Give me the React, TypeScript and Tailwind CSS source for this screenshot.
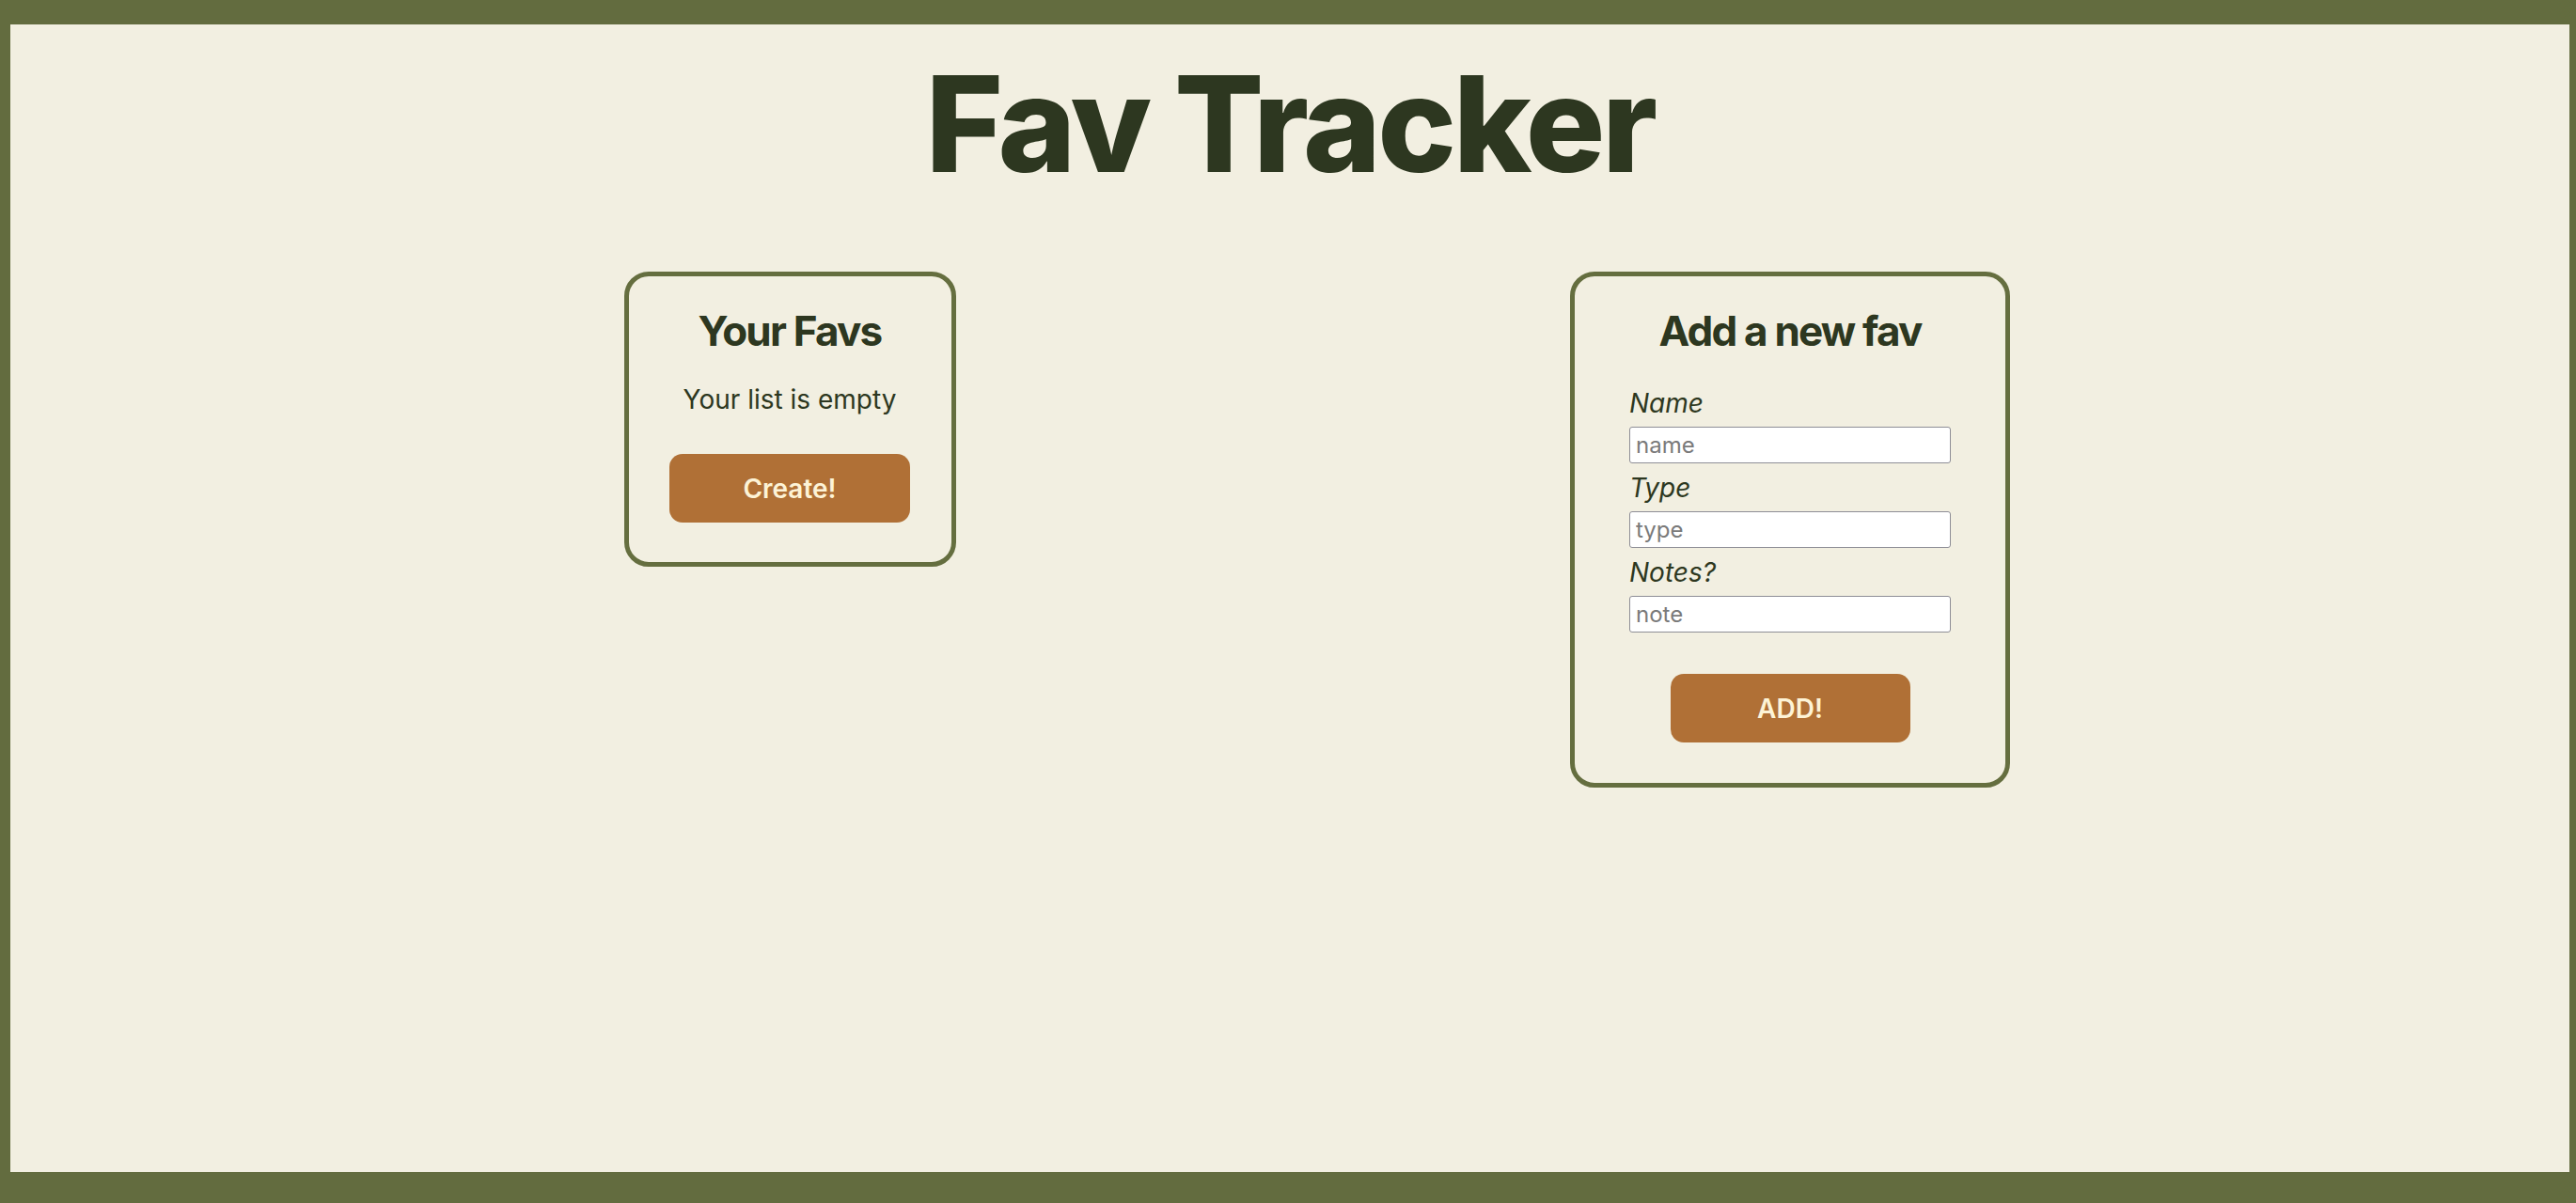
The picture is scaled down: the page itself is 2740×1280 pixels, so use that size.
import React from "react";

const font = { fontFamily: "Inter, 'Noto Sans', sans-serif" };

function Field({ label, placeholder }: { label: string; placeholder: string }) {
  return (
    <div className="flex flex-col">
      <label className="text-[28px] leading-none italic text-[#2d3720]">{label}</label>
      <input
        placeholder={placeholder}
        className="mt-[11px] h-[39px] w-[342px] rounded-[3px] border border-[#8e8e96] bg-white pl-[6px] text-[24px] text-[#2d3720] placeholder:text-[#7a7a7a] outline-none"
        style={font}
      />
    </div>
  );
}

export default function App() {
  return (
    <div className="min-h-[1280px] bg-[#636c3f] pt-[26px] pl-[11px] pr-[7px] pb-[33px]" style={font}>
      <div className="flex h-[1221px] flex-col bg-[#f2efe1]">
        <h1 className="mt-[35px] text-center text-[141px] leading-none font-extrabold tracking-[-3.5px] text-[#2d3720]">
          Fav Tracker
        </h1>
        <div className="mt-[87px] flex justify-center">
          <div className="flex w-[1064px] justify-center items-start">
            <div className="flex w-[353px] flex-col items-center rounded-[26px] border-[5px] border-[#656e3f] px-[38px] pt-[36px] pb-[42px]">
              <h2 className="text-[44px] leading-none font-bold tracking-[-1.8px] text-[#2d3720]">Your Favs</h2>
              <p className="mt-[37px] text-[28px] leading-none text-[#2d3720]">Your list is empty</p>
              <button className="mt-[44px] flex h-[73px] w-[256px] items-center justify-center rounded-[14px] bg-[#b07036] text-[28px] leading-none font-semibold text-[#fdf3d6]">
                Create!
              </button>
            </div>
          </div>
          <div className="flex w-[1064px] justify-center items-start">
            <div className="flex w-[468px] flex-col items-center rounded-[26px] border-[5px] border-[#656e3f] pt-[36px] pb-[43px]">
              <h2 className="text-[44px] leading-none font-bold tracking-[-1.8px] text-[#2d3720]">Add a new fav</h2>
              <div className="mt-[41px] flex flex-col gap-[12px]">
                <Field label="Name" placeholder="name" />
                <Field label="Type" placeholder="type" />
                <Field label="Notes?" placeholder="note" />
              </div>
              <button className="mt-[44px] flex h-[73px] w-[255px] items-center justify-center rounded-[14px] bg-[#b07036] text-[28px] leading-none font-semibold text-[#fdf3d6]">
                ADD!
              </button>
            </div>
          </div>
        </div>
      </div>
    </div>
  );
}
